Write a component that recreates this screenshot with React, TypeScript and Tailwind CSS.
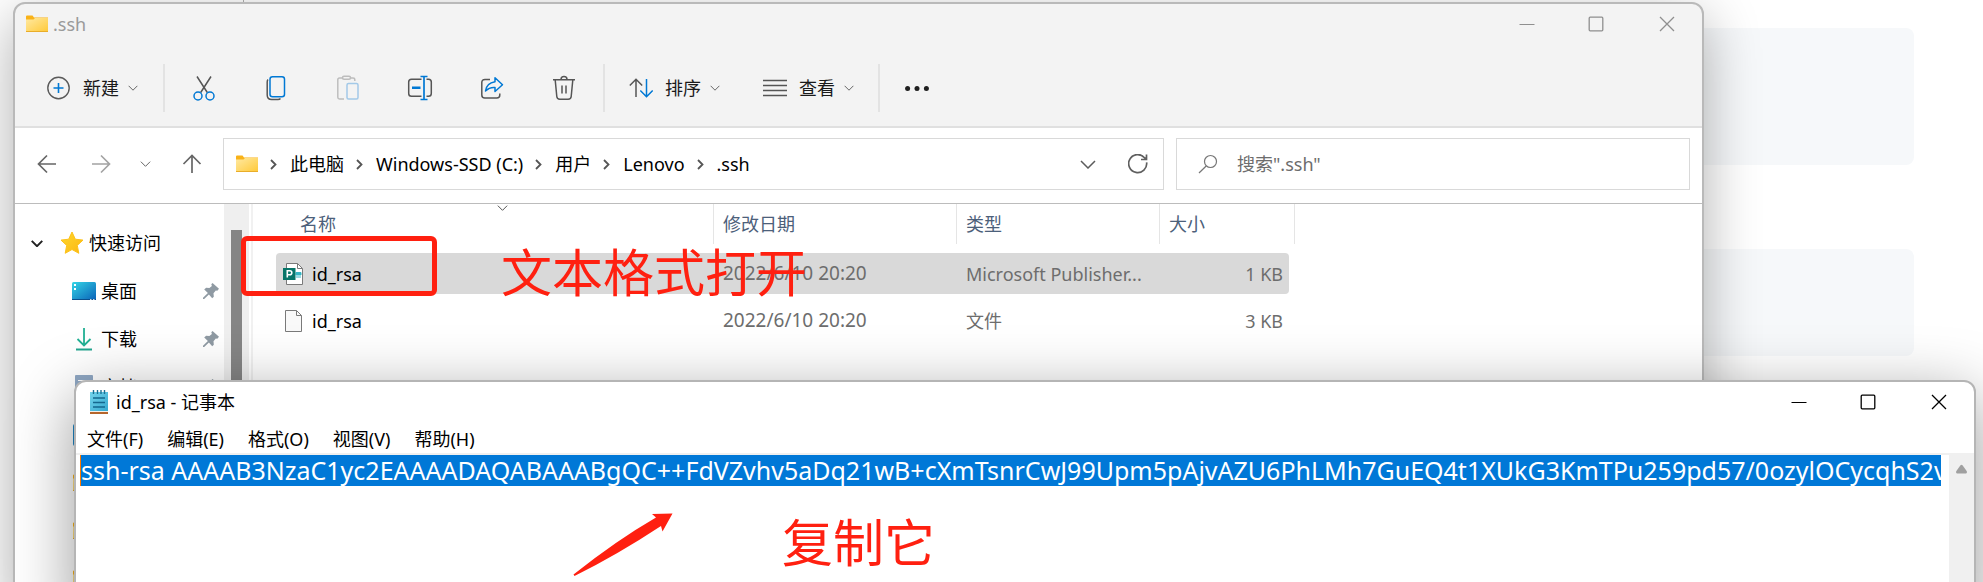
import type { ReactNode } from "react";

const SSH_KEY =
  "ssh-rsa AAAAB3NzaC1yc2EAAAADAQABAAABgQC++FdVZvhv5aDq21wB+cXmTsnrCwJ99Upm5pAjvAZU6PhLMh7GuEQ4t1XUkG3KmTPu259pd57/0ozylOCycqhS2v";

function Chevron({ className }: { className: string }) {
  return (
    <svg viewBox="0 0 16 9" fill="none" stroke="currentColor" className={className}>
      <path d="M1 1l7 7 7-7" vectorEffect="non-scaling-stroke" />
    </svg>
  );
}

function FolderIcon() {
  return (
    <svg width="22" height="18" viewBox="0 0 22 18" className="shrink-0">
      <defs>
        <linearGradient id="folderFace" x1="0" y1="0" x2="1" y2="1">
          <stop offset="0" stopColor="#ffe9a2" />
          <stop offset="1" stopColor="#ffc937" />
        </linearGradient>
      </defs>
      <path d="M0 1.5Q0 .5 1 .5h5.500l1.500 2H22V6H0z" fill="#f9b218" />
      <path d="M0 4.500h7.500l1.500-1.500h13V17H0z" fill="url(#folderFace)" />
      <path d="M0 16.500h22" stroke="#e9ad2a" />
    </svg>
  );
}

function PlusCircle() {
  return (
    <svg width="24" height="24" viewBox="0 0 24 24" fill="none" strokeWidth="1.4">
      <circle cx="11.500" cy="12" r="10.700" stroke="#5a5a5a" />
      <path d="M11.500 7v10M6.500 12h10" stroke="#0078d4" strokeWidth="1.600" />
    </svg>
  );
}

function CutIcon() {
  return (
    <svg width="24" height="26" viewBox="0 0 24 26" fill="none" strokeWidth="1.500">
      <path d="M5 1.500l10.300 16M19 1.500L8.700 17.500" stroke="#555" />
      <circle cx="6" cy="21" r="4" stroke="#0078d4" />
      <circle cx="18" cy="21" r="4" stroke="#0078d4" />
    </svg>
  );
}

function CopyIcon() {
  return (
    <svg width="24" height="26" viewBox="0 0 24 26" fill="none" strokeWidth="1.500">
      <path d="M4 4.500Q3.200 5.300 3.200 7v13q0 4.500 4.500 4.500H14q1.600 0 2.500-1" stroke="#555" />
      <rect x="6" y="1.700" width="14.500" height="20" rx="2.500" stroke="#0078d4" fill="#f3f3f3" />
    </svg>
  );
}

function PasteIcon() {
  return (
    <svg width="24" height="26" viewBox="0 0 24 26" fill="none" strokeWidth="1.500">
      <path d="M7 3H3.500Q1.800 3 1.800 4.700v17.600q0 1.700 1.700 1.700H8M14.500 3H17q1.800 0 1.800 1.700V6" stroke="#bdbdbd" />
      <rect x="6.500" y="1.200" width="8" height="3" rx="1.500" stroke="#bdbdbd" />
      <rect x="11" y="8.500" width="11" height="15.500" rx="1.500" stroke="#a3c9e8" />
    </svg>
  );
}

function RenameIcon() {
  return (
    <svg width="26" height="26" viewBox="0 0 26 26" fill="none" strokeWidth="1.500">
      <path d="M14.500 4.200H4.500Q1.700 4.200 1.700 7v11.500q0 2.800 2.800 2.800h10M19.500 4.200h2Q24.300 4.200 24.300 7v11.500q0 2.800-2.800 2.800h-2" stroke="#555" />
      <path d="M5 12.800h8.500" stroke="#0078d4" strokeWidth="2.600" />
      <path d="M13.500 1.500h7M17 1.500v23M13.500 24.500h7" stroke="#0078d4" strokeWidth="1.700" />
    </svg>
  );
}

function ShareIcon() {
  return (
    <svg width="24" height="26" viewBox="0 0 24 26" fill="none" strokeWidth="1.500">
      <path d="M10 4.500H5Q1.800 4.500 1.800 7.500v12.500q0 3 3 3h12q3 0 3-3v-1.500" stroke="#555" />
      <path d="M15 2.800l7.500 7-7.500 6.700v-4q-5.500-.5-9.500 3.500 1-8 9.500-9.300z" stroke="#0078d4" strokeLinejoin="round" />
    </svg>
  );
}

function TrashIcon() {
  return (
    <svg width="24" height="26" viewBox="0 0 24 26" fill="none" stroke="#555" strokeWidth="1.500">
      <path d="M1 4.700h22M3.200 5l1.600 16.500q.3 2.800 3 2.800h8.400q2.700 0 3-2.800L20.800 5M9 4.500Q9 1.500 12 1.500t3 3M10 10.500v8M14 10.500v8" />
    </svg>
  );
}

function SortIcon() {
  return (
    <svg width="24" height="24" viewBox="0 0 24 24" fill="none" strokeWidth="1.500">
      <path d="M7 21V3.500M.8 9.500L7 3.300l6.200 6.200" stroke="#555" />
      <path d="M17.500 3v17.500M11.300 14.500l6.200 6.200 6.200-6.200" stroke="#0078d4" />
    </svg>
  );
}

function ViewIcon() {
  return (
    <svg width="24" height="24" viewBox="0 0 24 24" stroke="#555" strokeWidth="1.300">
      <path d="M0 4.500h24M0 9.500h24M0 14.500h24M0 19.500h24" />
    </svg>
  );
}

function Arrow({ className }: { className: string }) {
  return (
    <svg width="20" height="20" viewBox="0 0 20 20" fill="none" strokeWidth="1.700" stroke="currentColor" className={className}>
      <path d="M19 10H2M10 1.500L1.500 10l8.500 8.500" />
    </svg>
  );
}

function StarIcon() {
  return (
    <svg width="24" height="24" viewBox="0 0 24 24">
      <defs>
        <linearGradient id="star" x1="0" y1="0" x2="1" y2="1">
          <stop offset="0" stopColor="#ffd92e" />
          <stop offset="1" stopColor="#fbb612" />
        </linearGradient>
      </defs>
      <path
        d="M12 1l3.300 7.200 7.700.9-5.700 5.300 1.500 7.900L12 18.500l-6.800 3.800 1.500-7.900L1 9.100l7.700-.9z"
        fill="url(#star)"
        stroke="#fcc21b"
        strokeLinejoin="round"
      />
    </svg>
  );
}

function DesktopIcon() {
  return (
    <svg width="24" height="18" viewBox="0 0 24 18">
      <defs>
        <linearGradient id="desk" x1="0" y1="0" x2="1" y2="1">
          <stop offset="0" stopColor="#34d5e6" />
          <stop offset="1" stopColor="#0a62b8" />
        </linearGradient>
      </defs>
      <rect width="24" height="18" rx="1.500" fill="url(#desk)" />
      <path d="M2 2h2v2H2zM2 6h2v2H2z" fill="#fff" />
      <path d="M0 17.500h24" stroke="#0b4f8c" />
      <path d="M18 17.500h1.500M21 17.500h1.500" stroke="#fff" strokeWidth=".8" />
    </svg>
  );
}

function DownloadIcon() {
  return (
    <svg width="24" height="24" viewBox="0 0 24 24" fill="none" strokeWidth="1.800">
      <path d="M12.010 1v17M5.500 12l6.500 6.500 6.500-6.500" stroke="#22b094" />
      <path d="M4 22.500h16" stroke="#22a58f" strokeWidth="2" />
    </svg>
  );
}

function DocumentIcon() {
  return (
    <svg width="24" height="24" viewBox="0 0 24 24">
      <rect x="3" y="0" width="18" height="24" rx="1" fill="#90a8c4" />
      <path d="M6 5.500h12M6 9.500h12M6 13.500h12" stroke="#fff" />
    </svg>
  );
}

function PictureIcon() {
  return (
    <svg width="24" height="22" viewBox="0 0 24 22">
      <rect x="1" width="23" height="22" rx="2" fill="#1f86c4" />
      <path d="M5 19l7-8 10 8z" fill="#e8f5fc" />
    </svg>
  );
}

function PinIcon() {
  return (
    <svg width="16" height="16" viewBox="0 0 16 16" fill="#8f9aa3">
      <path d="M9.500 0l6.500 5.800-1.700 2-1.500-.2-2.300 2.700.3 3.400L9.200 15.200 5.900 11.400 1.200 16H0v-1.200L4.900 9.900 1.200 6.500 3.100 4.700l3.300.3L8.900 2.900 8.300 1.300z" />
    </svg>
  );
}

function PublisherIcon() {
  return (
    <svg width="21" height="22" viewBox="0 0 21 22">
      <path d="M3.500.5h11l5 5v16h-16z" fill="#fff" stroke="#7a7a7a" />
      <path d="M14.500.5v5h5" fill="none" stroke="#7a7a7a" />
      <path d="M13 9.500h5v2.500h-5zM13 14h5" fill="#37b7c4" stroke="#37b7c4" />
      <rect y="5" width="12.500" height="12" fill="#077568" />
      <path d="M4.300 14.500V7.800h2.500a1.900 1.900 0 0 1 0 4H4.500" fill="none" stroke="#fff" strokeWidth="1.600" />
    </svg>
  );
}

function FileIcon() {
  return (
    <svg width="21" height="22" viewBox="0 0 21 22">
      <path d="M2.500.5h11l5 5v16h-16z" fill="#f9f9f9" stroke="#7a7a7a" />
      <path d="M13.500.5v5h5" fill="none" stroke="#7a7a7a" />
    </svg>
  );
}

function NotepadIcon() {
  return (
    <svg width="20" height="24" viewBox="0 0 20 24">
      <defs>
        <linearGradient id="pad" x1="0" y1="0" x2="1" y2="1">
          <stop offset="0" stopColor="#74d4ec" />
          <stop offset="1" stopColor="#35a9d0" />
        </linearGradient>
      </defs>
      <rect x="1" y="21" width="18" height="3" fill="#b5652b" />
      <rect x="1" y="20" width="18" height="2" fill="#f3efe9" />
      <rect x="1" y="2" width="18" height="19" fill="url(#pad)" />
      <path d="M4.500 0v4M8.500 0v4M12 0v4M15.500 0v4" stroke="#1b6f93" strokeWidth="1.400" />
      <path d="M4 8h12M4 12.500h12M4 17h12" stroke="#15688f" strokeWidth="1.400" />
    </svg>
  );
}

function WindowControls({ className }: { className: string }) {
  return (
    <div className={`flex ${className}`}>
      <button aria-label="最小化" className="flex h-10 w-[67px] items-center justify-center">
        <svg width="16" height="16" viewBox="0 0 16 16" stroke="currentColor" fill="none">
          <path d="M.5 8.500h15" />
        </svg>
      </button>
      <button aria-label="最大化" className="flex h-10 w-[71px] items-center justify-center">
        <svg width="16" height="16" viewBox="0 0 16 16" stroke="currentColor" fill="none" strokeWidth="1.300">
          <rect x="1.200" y="1.200" width="13.600" height="13.600" rx="1" />
        </svg>
      </button>
      <button aria-label="关闭" className="flex h-10 w-[71px] items-center justify-center">
        <svg width="16" height="16" viewBox="0 0 16 16" stroke="currentColor" fill="none" strokeWidth="1.300">
          <path d="M1 1l14 14M15 1L1 15" />
        </svg>
      </button>
    </div>
  );
}

function IconButton({ label, children }: { label: string; children: ReactNode }) {
  return (
    <button aria-label={label} className="flex h-12 w-[72px] items-center justify-center">
      {children}
    </button>
  );
}

function MenuButton({ icon, children }: { icon: ReactNode; children: ReactNode }) {
  return (
    <button className="flex h-12 items-center whitespace-nowrap">
      {icon}
      <span className="ml-3">{children}</span>
      <Chevron className="ml-[9px] h-[6px] w-[10px] text-[#666]" />
    </button>
  );
}

function Divider() {
  return <div className="h-12 w-[2px] shrink-0 bg-[#e3e3e3]" />;
}

function Toolbar() {
  return (
    <div className="flex h-[84px] items-center border-b-2 border-[#e0e0e0] pt-[6px] pl-8 text-lg text-[#1a1a1a]">
      <MenuButton icon={<PlusCircle />}>新建</MenuButton>
      <div className="w-[25px]" />
      <Divider />
      <div className="flex px-[3px]">
        <IconButton label="剪切"><CutIcon /></IconButton>
        <IconButton label="复制"><CopyIcon /></IconButton>
        <IconButton label="粘贴"><PasteIcon /></IconButton>
        <IconButton label="重命名"><RenameIcon /></IconButton>
        <IconButton label="共享"><ShareIcon /></IconButton>
        <IconButton label="删除"><TrashIcon /></IconButton>
      </div>
      <Divider />
      <div className="flex gap-[43px] px-6">
        <MenuButton icon={<SortIcon />}>排序</MenuButton>
        <MenuButton icon={<ViewIcon />}>查看</MenuButton>
      </div>
      <Divider />
      <button aria-label="更多" className="flex h-12 items-center px-[25px]">
        <svg width="24" height="6" viewBox="0 0 24 6" fill="#1f1f1f">
          <circle cx="2.600" cy="3.500" r="2.500" />
          <circle cx="12" cy="3.500" r="2.500" />
          <circle cx="21.400" cy="3.500" r="2.500" />
        </svg>
      </button>
    </div>
  );
}

const crumbs = ["此电脑", "Windows-SSD (C:)", "用户", "Lenovo", ".ssh"];

function AddressRow() {
  return (
    <div className="flex h-[76px] gap-3 border-b border-[#bcbcbc] bg-white pt-[10px] pr-3">
      <div className="flex h-[52px] w-[196px] items-center pl-[22px] text-[#666]">
        <button aria-label="后退"><Arrow className="" /></button>
        <button aria-label="前进" className="ml-[34px]"><Arrow className="rotate-180 text-[#a3a3a3]" /></button>
        <button aria-label="最近的位置" className="ml-[29px]"><Chevron className="h-[6px] w-[11px]" /></button>
        <button aria-label="上移" className="ml-[31px]"><Arrow className="rotate-90" /></button>
      </div>
      <div className="flex h-[52px] min-w-0 flex-1 items-center border border-[#d9d9d9] pl-3">
        <FolderIcon />
        <nav aria-label="路径" className="flex items-center whitespace-nowrap text-lg text-black">
          {crumbs.map((crumb) => (
            <div key={crumb} className="flex items-center">
              <svg width="32" height="12" viewBox="0 0 32 12" fill="none" stroke="#555" strokeWidth="1.800">
                <path d="M13 2l4.500 4.500L13 11" />
              </svg>
              <a href="#path">{crumb}</a>
            </div>
          ))}
        </nav>
        <button aria-label="以前的位置" className="ml-auto"><Chevron className="h-[9px] w-4 stroke-[1.5px] text-[#5c5c5c]" /></button>
        <button aria-label="刷新" className="mr-[15px] ml-8">
          <svg width="20" height="20" viewBox="0 0 20 20" fill="none" stroke="#5f5f5f" strokeWidth="1.700">
            <path d="M18.600 8.300A9 9 0 1 1 16.500 3.700L18.300 5.300M18.500.5v5H13" />
          </svg>
        </button>
      </div>
      <label className="flex h-[52px] w-[514px] items-center border border-[#d9d9d9] pl-[21px]">
        <svg width="20" height="20" viewBox="0 0 20 20" fill="none" stroke="#777" strokeWidth="1.200">
          <circle cx="12.500" cy="7.500" r="6" />
          <path d="M8.200 12L1 19" />
        </svg>
        <input
          type="text"
          aria-label="搜索"
          placeholder={'搜索".ssh"'}
          className="ml-[19px] min-w-0 flex-1 bg-transparent text-lg outline-none placeholder:text-[#6d6d6d]"
        />
      </label>
    </div>
  );
}

const places = [
  { name: "桌面", icon: <DesktopIcon /> },
  { name: "下载", icon: <DownloadIcon /> },
  { name: "文档", icon: <DocumentIcon /> },
];

function Sidebar() {
  return (
    <div className="flex w-[238px] shrink-0 border-r-2 border-[#f1f1f1] pr-[2px]">
      <nav aria-label="导航" className="flex-1 pt-[15px] text-lg text-black">
        <a href="#quick" className="flex h-12 items-center pl-4">
          <Chevron className="h-[7px] w-3 stroke-[2px] text-[#222]" />
          <span className="ml-[17px]"><StarIcon /></span>
          <span className="ml-[5px]">快速访问</span>
        </a>
        {places.map((place) => (
          <a key={place.name} href="#place" className="flex h-12 items-center pr-[5px] pl-[57px]">
            {place.icon}
            <span className="ml-[5px]">{place.name}</span>
            <span className="ml-auto"><PinIcon /></span>
          </a>
        ))}
        <div className="flex h-12 items-center pl-[57px]"><PictureIcon /></div>
        {[0, 1, 2].map((n) => (
          <div key={n} className="flex h-12 items-center pl-[58px]"><FolderIcon /></div>
        ))}
      </nav>
      <div className="w-[25px] bg-[#efefef] px-[7px] pt-[26px]">
        <div className="h-full bg-[#858585]" />
      </div>
    </div>
  );
}

const files = [
  { key: "pub", icon: <PublisherIcon />, type: "Microsoft Publisher...", size: "1 KB", selected: true },
  { key: "plain", icon: <FileIcon />, type: "文件", size: "3 KB", selected: false },
];

function FileList() {
  return (
    <div className="min-w-0 flex-1 pl-[23px]">
      <table className="w-[1019px] table-fixed border-separate border-spacing-0 text-left text-lg">
        <colgroup>
          <col className="w-[438px]" />
          <col className="w-[243px]" />
          <col className="w-[203px]" />
          <col className="w-[135px]" />
        </colgroup>
        <thead className="text-[#4c607a]">
          <tr className="h-10">
            <th className="relative border-r border-[#e5e5e5] pl-6 font-normal">
              名称
              <Chevron className="absolute top-[1px] left-[221px] h-[6px] w-[11px] text-[#555]" />
            </th>
            <th className="border-r border-[#e5e5e5] pl-[9px] font-normal">修改日期</th>
            <th className="border-r border-[#e5e5e5] pl-[9px] font-normal">类型</th>
            <th className="border-r border-[#e5e5e5] pl-[9px] font-normal">大小</th>
          </tr>
        </thead>
        <tbody className="text-[#6d6d6d]">
          <tr className="h-[6px]"><td colSpan={4} /></tr>
          {files.map((file) => {
            const fill = file.selected ? "bg-[#d9d9d9]" : "";
            return (
              <tr key={file.key} className="h-[47px]">
                <td>
                  <div className={`flex h-[41px] items-center rounded-l-sm pl-[7px] text-black ${fill}`}>
                    {file.icon}
                    <span className="ml-2">id_rsa</span>
                  </div>
                </td>
                <td><div className={`flex h-[41px] items-center pl-[9px] text-[19px] ${fill}`}>2022/6/10 20:20</div></td>
                <td><div className={`flex h-[41px] items-center pl-[9px] whitespace-nowrap ${fill}`}>{file.type}</div></td>
                <td className="pr-[6px]">
                  <div className={`flex h-[41px] items-center justify-end rounded-r-sm pr-[6px] ${fill}`}>{file.size}</div>
                </td>
              </tr>
            );
          })}
        </tbody>
      </table>
    </div>
  );
}

function Explorer() {
  return (
    <section className="absolute top-[2px] right-[279px] left-[13px] overflow-hidden rounded-t-xl border-2 border-[#b9b9b9] bg-[#f3f3f3] shadow-[0_16px_56px_rgba(0,0,0,0.32)]">
      <header className="flex h-10 items-center pl-[11px]">
        <FolderIcon />
        <h1 className="ml-[5px] text-lg text-[#9a9a9a]">.ssh</h1>
        <WindowControls className="ml-auto text-[#8f8f8f]" />
      </header>
      <Toolbar />
      <AddressRow />
      <div className="flex bg-white">
        <Sidebar />
        <FileList />
      </div>
    </section>
  );
}

const menus = ["文件(F)", "编辑(E)", "格式(O)", "视图(V)", "帮助(H)"];

function Notepad() {
  return (
    <section className="absolute top-[380px] right-[7px] -bottom-10 left-[74px] flex flex-col overflow-hidden rounded-t-xl border-2 border-[#b5b5b5] bg-white text-lg text-black shadow-[0_16px_64px_rgba(0,0,0,0.4)]">
      <header className="flex h-10 items-center pl-[13px]">
        <NotepadIcon />
        <h2 className="ml-[7px]">id_rsa - 记事本</h2>
        <WindowControls className="ml-auto" />
      </header>
      <div role="menubar" className="flex h-[31px] items-center gap-6 pt-[2px] pl-[11px]">
        {menus.map((menu) => (
          <button key={menu} role="menuitem" className="whitespace-nowrap">{menu}</button>
        ))}
      </div>
      <div className="flex flex-1 border-t-2 border-[#f0f0f0]">
        <div className="flex-1 pr-2 pl-1">
          <textarea
            readOnly
            rows={1}
            wrap="off"
            aria-label="文本编辑器"
            defaultValue={SSH_KEY}
            className="block h-[31px] w-full resize-none overflow-hidden border-l border-[#ff7a00] bg-[#0078d7] text-[25px] leading-[31px] whitespace-pre text-white outline-none"
          />
        </div>
        <div className="flex w-[25px] justify-center bg-[#f0f0f0] pt-[9px]">
          <svg width="11" height="10" viewBox="0 0 11 10" fill="#a0a0a0">
            <path d="M4.500 1.200Q5.500.2 6.500 1.200L11 7.500Q11 9.500 10 9.500H1Q0 9.500 0 7.500z" />
          </svg>
        </div>
      </div>
    </section>
  );
}

export default function App() {
  return (
    <main className="relative h-screen w-full overflow-hidden bg-white font-['Noto_Sans','Noto_Sans_CJK_SC',sans-serif]">
      <div className="ml-[243px] flex flex-col gap-[84px] border-l border-[#b0b0b0] pt-7 pr-[69px]">
        <div className="h-[137px] rounded-lg bg-[#f6f8fa]" />
        <div className="h-[107px] rounded-lg bg-[#f6f8fa]" />
      </div>
      <Explorer />
      <Notepad />
      <div className="absolute top-[236px] left-[241px] h-[60px] w-[196px] rounded-md border-[5px] border-[#ff2010]" />
      <p className="absolute top-[236px] left-[501px] text-[51px] leading-[72px] whitespace-nowrap text-[#ff2010]">文本格式打开</p>
      <p className="absolute top-[506px] left-[782px] text-[51px] leading-[72px] whitespace-nowrap text-[#ff2010]">复制它</p>
      <svg className="absolute top-[512px] left-[572px]" width="102" height="66" viewBox="0 0 102 66" fill="#ff2010">
        <path d="M100.500 1.500L80 2l4 3.500Q45 28 1.500 62.500L2.500 64Q45 43 89 14l1.500 5.500z" />
      </svg>
    </main>
  );
}
